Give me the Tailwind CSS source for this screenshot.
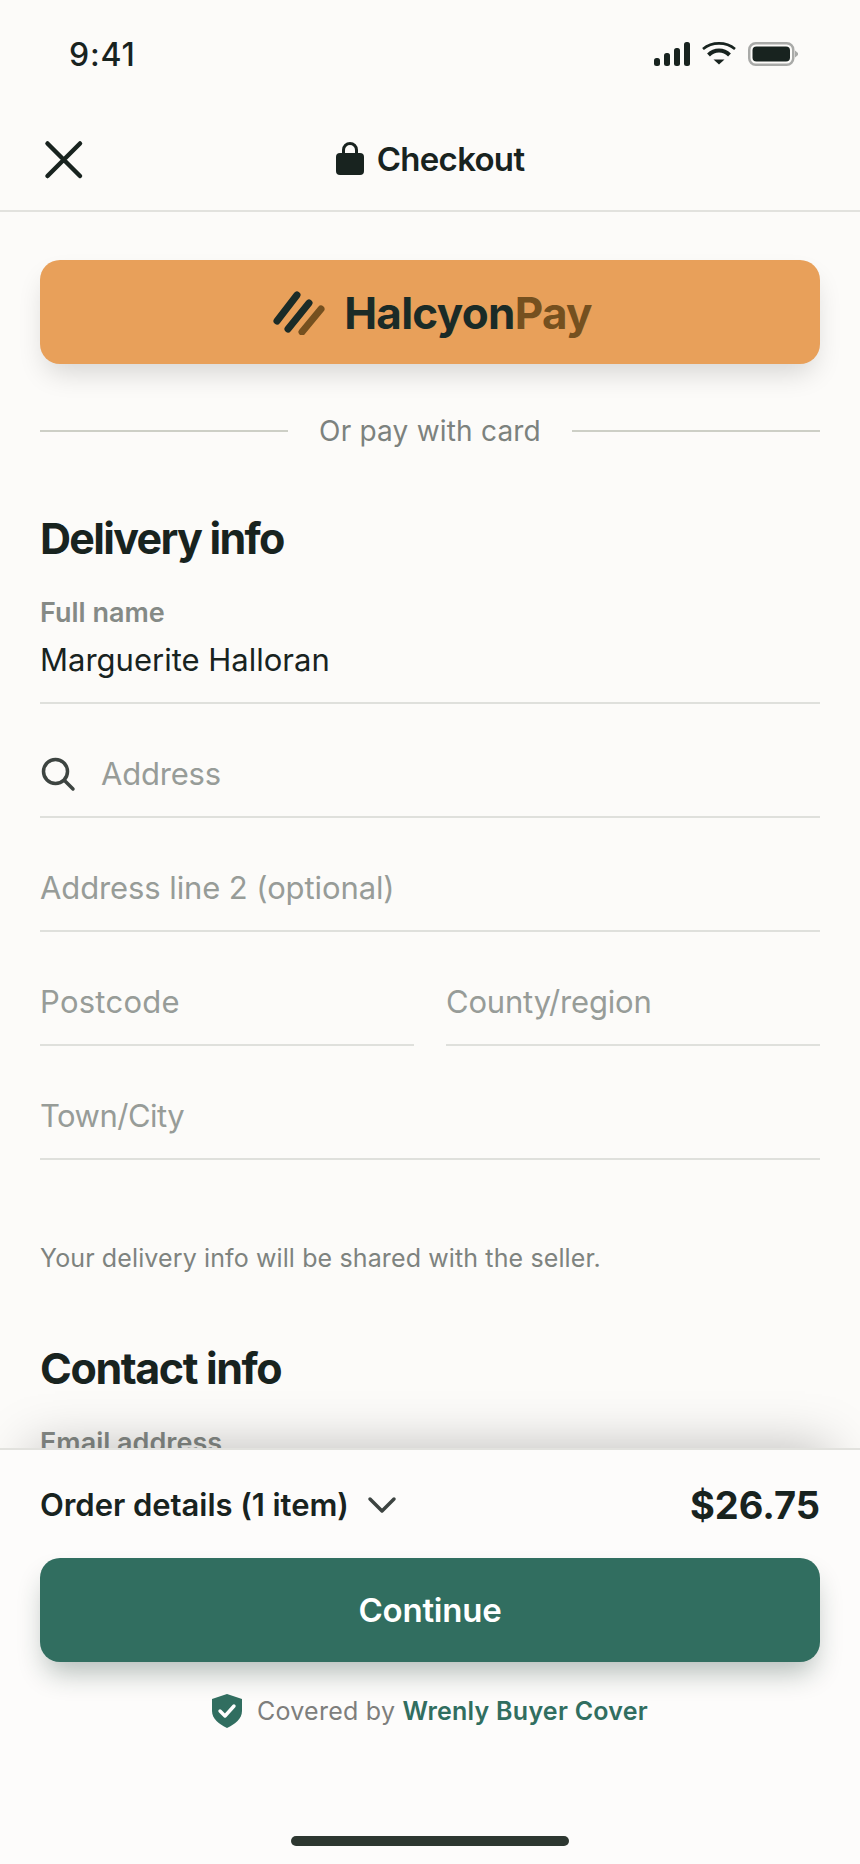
<!DOCTYPE html>
<html><head><meta charset="utf-8"><script src="https://cdn.jsdelivr.net/npm/@tailwindcss/browser@4"></script></head>
<body class="m-0">
<div class="relative w-[860px] h-[1864px] overflow-hidden bg-[#fcfbf9] font-['Inter',sans-serif] text-[#18231f]">
<div class="flex h-[105px] items-start justify-between pl-[69px] pr-[62px] pt-[36px]">
<span class="text-[32px] leading-[38px] font-medium tracking-[0.8px]">9:41</span>
<div class="flex items-start gap-[12px] pt-[6px]">
<svg width="36" height="24" viewBox="0 0 36 24" fill="#18231f"><rect x="0" y="16" width="6" height="8" rx="2.5"/><rect x="10" y="11" width="6" height="13" rx="2.5"/><rect x="20" y="6" width="6" height="18" rx="2.5"/><rect x="30" y="0" width="6" height="24" rx="2.5"/></svg>
<svg width="34" height="24" viewBox="0 0 34 24" fill="none" stroke="#18231f"><path d="M1 7 C10 -0.5 24 -0.5 33 7" stroke-width="2.6"/><path d="M6.5 13 C12.5 7 21.5 7 27.5 13" stroke-width="4"/><path d="M11.5 17.5 H22.5 L17 22.5 Z" fill="#18231f" stroke="none"/></svg>
<svg width="50" height="24" viewBox="0 0 50 24" fill="none"><rect x="1.25" y="1.25" width="44" height="21.5" rx="6.5" stroke="#a9aaa8" stroke-width="2.5"/><rect x="4.5" y="4.5" width="37.5" height="15" rx="4" fill="#18231f"/><path d="M47 8.5 L50 11 V13 L47 15.5 Z" fill="#a9aaa8"/></svg>
</div>
</div>
<header class="relative flex h-[107px] items-center justify-center border-b-2 border-[#e2e2de]">
<svg class="absolute left-[44px] top-[35px]" width="40" height="40" viewBox="0 0 40 40" fill="none" stroke="#18231f" stroke-width="4.5" stroke-linecap="round"><path d="M3.5 3.5 L36 36 M36 3.5 L3.5 36"/></svg>
<div class="flex items-center gap-[13px]">
<svg width="28" height="34" viewBox="0 0 28 34" fill="#18231f"><path d="M7.5 13 V9 a6.5 6.5 0 0 1 13 0 V13" fill="none" stroke="#18231f" stroke-width="3"/><rect x="0" y="12" width="28" height="22" rx="4"/></svg>
<span class="text-[33px] leading-[42px] font-semibold tracking-[-0.7px] pt-[2px]">Checkout</span>
</div>
</header>
<main class="px-[40px] pt-[48px]">
<button class="flex h-[104px] w-full items-center justify-center gap-[19px] rounded-[20px] bg-[#e8a05a] pl-[5px] pt-[1px] shadow-[0_14px_28px_-6px_rgba(0,0,0,0.16)]">
<svg width="52" height="44" viewBox="0 0 52 44" fill="none" stroke-width="7" stroke-linecap="round"><path d="M4 30 L24 4" stroke="#1a2b27"/><path d="M15 38 L36 12" stroke="#1a2b27"/><path d="M29 41 L48 18" stroke="#75501f"/></svg>
<span class="text-[44px] leading-[52px] font-bold tracking-[-0.7px] text-[#1a2b27]">Halcyon<span class="text-[#75501f]">Pay</span></span>
</button>
<div class="mt-[50px] flex items-center justify-between">
<div class="h-[2px] w-[248px] bg-[#cdcfc6]"></div>
<span class="text-[28px] leading-[34px] text-[#7c827e] tracking-[0.2px]">Or pay with card</span>
<div class="h-[2px] w-[248px] bg-[#cdcfc6]"></div>
</div>
<h2 class="mt-[64px] text-[43px] leading-[52px] font-bold tracking-[-1.7px]">Delivery info</h2>
<div class="mt-[34px] h-[106px] border-b-2 border-[#dfe0dc]">
<div class="text-[27px] leading-[30px] font-semibold text-[#858a86]">Full name</div>
<div class="mt-[12px] text-[31px] leading-[40px]">Marguerite Halloran</div>
</div>
<div class="flex h-[114px] items-center gap-[25px] border-b-2 border-[#dfe0dc] pt-[27px]">
<svg width="36" height="36" viewBox="0 0 36 36" fill="none" stroke="#3d4441" stroke-width="3.5" stroke-linecap="round"><circle cx="15.5" cy="15.5" r="12"/><path d="M24.5 24.5 L33 33"/></svg>
<span class="text-[31px] leading-[40px] text-[#979c98] tracking-[-0.2px]">Address</span>
</div>
<div class="flex h-[114px] items-center border-b-2 border-[#dfe0dc] pt-[27px]"><span class="text-[31px] leading-[40px] text-[#979c98] tracking-[-0.1px]">Address line 2 (optional)</span></div>
<div class="grid grid-cols-2 gap-[32px]">
<div class="flex h-[114px] items-center border-b-2 border-[#dfe0dc] pt-[27px]"><span class="text-[31px] leading-[40px] text-[#979c98] tracking-[0.25px]">Postcode</span></div>
<div class="flex h-[114px] items-center border-b-2 border-[#dfe0dc] pt-[27px]"><span class="text-[31px] leading-[40px] text-[#979c98] tracking-[-0.2px]">County/region</span></div>
</div>
<div class="flex h-[114px] items-center border-b-2 border-[#dfe0dc] pt-[27px]"><span class="text-[31px] leading-[40px] text-[#979c98] tracking-[-0.5px]">Town/City</span></div>
<p class="mt-[81px] text-[25px] leading-[34px] text-[#7e837f] tracking-[0.12px]">Your delivery info will be shared with the seller.</p>
<h2 class="mt-[67px] text-[43px] leading-[52px] font-bold tracking-[-1.4px]">Contact info</h2>
<div class="mt-[34px] text-[27px] leading-[30px] font-semibold text-[#858a86]">Email address</div>
</main>
<footer class="absolute inset-x-0 top-[1448px] h-[416px] border-t-2 border-[#e2e2de] bg-[#fdfcfb] px-[40px] shadow-[0_-30px_50px_-30px_rgba(0,0,0,0.26)]">
<div class="flex items-center justify-between pt-[33px]">
<div class="flex items-center gap-[18px]">
<span class="text-[31px] leading-[40px] font-semibold tracking-[-0.05px]">Order details (1 item)</span>
<svg width="30" height="20" viewBox="0 0 30 20" fill="none" stroke="#3d4441" stroke-width="3.5" stroke-linecap="round" stroke-linejoin="round"><path d="M3 4 L15 16 L27 4"/></svg>
</div>
<span class="text-[38px] leading-[44px] font-bold">$26.75</span>
</div>
<button class="mt-[31px] flex h-[104px] w-full items-center justify-center rounded-[20px] bg-[#316e60] pt-[1px] text-[33px] font-semibold tracking-[-0.2px] text-white shadow-[0_16px_28px_-6px_rgba(20,50,40,0.32)]">Continue</button>
<div class="mt-[32px] flex items-center justify-center gap-[15px]">
<svg width="30" height="34" viewBox="0 0 30 34"><path d="M15 0 L30 5 V17 C30 25 23 30 15 34 C7 30 0 25 0 17 V5 Z" fill="#316e60"/><path d="M8 17 L13 22 L22 12" fill="none" stroke="#fff" stroke-width="3.4" stroke-linecap="round" stroke-linejoin="round"/></svg>
<span class="text-[25px] leading-[34px] text-[#7e7e7c] tracking-[0.25px]">Covered by <span class="font-semibold text-[#316e60]">Wrenly Buyer Cover</span></span>
</div>
</footer>
<div class="absolute bottom-[18px] left-[291px] h-[10px] w-[278px] rounded-[5px] bg-[#2d3730]"></div>
</div>
</body></html>
